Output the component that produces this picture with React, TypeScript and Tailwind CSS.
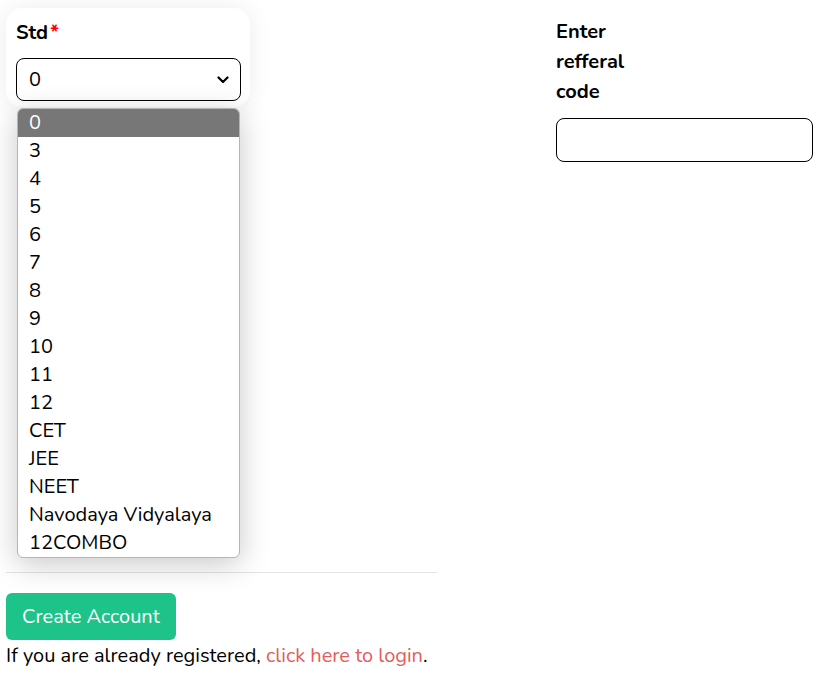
const options = ["0", "3", "4", "5", "6", "7", "8", "9", "10", "11", "12", "CET", "JEE", "NEET", "Navodaya Vidyalaya", "12COMBO"];

export default function App() {
  return (
    <div className="min-h-screen bg-white px-[6px] pt-[8px] text-black font-['Nunito','Open_Sans',sans-serif]">
      <div className="flex items-start">
        <div className="relative w-[244px] rounded-2xl bg-white px-[10px] pt-[14px] pb-[6px] shadow-[0_0_24px_rgba(0,0,0,0.08)]">
          <label className="block text-[20px] leading-[22px] font-bold">
            Std<span className="text-[#ff0000] ml-[2px]">*</span>
          </label>
          <div className="mt-[14px] flex h-[43px] w-[225px] items-center justify-between rounded-lg border border-black px-[12px] text-[20px]">
            <span>0</span>
            <svg width="12" height="8" viewBox="0 0 12 8" className="mr-[-1px]">
              <path d="M1.5 1.5 6 6l4.5-4.5" fill="none" stroke="#000" strokeWidth="2.2" strokeLinecap="round" strokeLinejoin="round" />
            </svg>
          </div>
          <ul className="absolute left-[11px] top-[100px] z-10 w-[223px] overflow-hidden rounded-md border border-[#b5b5b5] bg-white text-[20px] leading-[28px] shadow-[0_6px_30px_rgba(0,0,0,0.22)]">
            {options.map((o, i) => (
              <li key={o} className={i === 0 ? "bg-[#777777] px-[11px] text-white" : "px-[11px]"}>
                {o}
              </li>
            ))}
          </ul>
        </div>
        <div className="ml-[306px] w-[257px] pt-[9px]">
          <label className="block w-[80px] text-[20px] leading-[30px] font-bold">Enter refferal code</label>
          <input className="mt-[11px] h-[44px] w-[257px] rounded-lg border border-black px-3 outline-none" />
        </div>
      </div>
      <hr className="mt-[410px] w-[431px] border-t border-[#e3e3e3]" />
      <button className="mt-[20px] h-[47px] rounded-md bg-[#1dc389] px-[16px] text-[20px] text-white">
        Create Account
      </button>
      <p className="mt-[4px] text-[20px] leading-[24px]">
        If you are already registered, <a className="text-[#e35d5a]">click here to login</a>.
      </p>
    </div>
  );
}
